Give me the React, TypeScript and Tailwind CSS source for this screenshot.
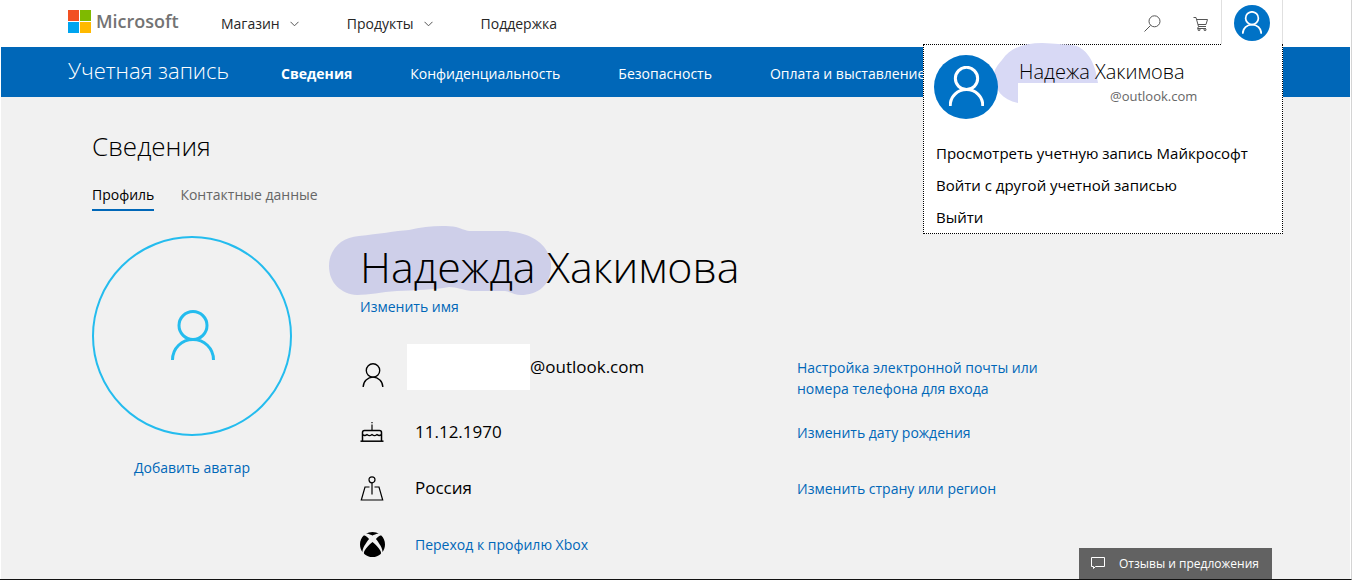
import type { ReactNode } from "react";

function PersonIcon({ className, stroke }: { className: string; stroke: number }) {
  return (
    <svg viewBox="0 0 44 50" className={className} fill="none" stroke="currentColor" strokeWidth={stroke} aria-hidden="true">
      <circle cx="22" cy="15.5" r="14" />
      <path d="M1.500 50C1.500 38 11 29.500 22 29.500S42.500 38 42.500 50" />
    </svg>
  );
}

function Chevron() {
  return (
    <svg viewBox="0 0 9 6" className="mt-px h-[6px] w-[9px]" fill="none" stroke="#555" strokeWidth="1" aria-hidden="true">
      <path d="M0.500 0.800L4.500 4.800L8.500 0.800" />
    </svg>
  );
}

function CakeIcon() {
  return (
    <svg viewBox="0 0 24 20" className="h-5 w-6" fill="none" stroke="currentColor" aria-hidden="true">
      <path d="M12 2.500V8M12 0V1.200" strokeWidth="1.200" />
      <path d="M2.500 19V10.500Q2.500 8.500 4.500 8.500H19.500Q21.500 8.500 21.500 10.500V19" strokeWidth="1.500" />
      <path d="M2.500 12.500Q4.800 14.500 7 12.500Q9.500 14.800 12 12.500Q14.500 14.800 17 12.500Q19.200 14.500 21.500 12.500" strokeWidth="1.200" />
      <path d="M0.500 19.200H23.500" strokeWidth="1.500" />
    </svg>
  );
}

function PlaceIcon() {
  return (
    <svg viewBox="0 0 24 25" className="h-[25px] w-6" fill="none" stroke="currentColor" strokeWidth="1.200" aria-hidden="true">
      <circle cx="12" cy="3.800" r="3" />
      <path d="M12 7V18.500" />
      <path d="M9.500 11H5L1.300 24H22.700L19 11H14.500" />
    </svg>
  );
}

function XboxIcon() {
  return (
    <svg viewBox="0 0 24 24" className="h-[25px] w-[25px] shrink-0" fill="currentColor" aria-hidden="true">
      <path d="M4.102 21.033C6.211 22.881 8.977 24 12 24c3.026 0 5.789-1.119 7.902-2.967 1.877-1.912-4.316-8.709-7.902-11.417-3.582 2.708-9.779 9.505-7.898 11.417zm11.16-14.406c2.500 2.961 7.484 10.313 6.076 12.912C23.002 17.480 24 14.861 24 12.004c0-3.340-1.365-6.362-3.570-8.536 0 0-.027-.022-.082-.042-.063-.022-.152-.045-.281-.045-.592 0-1.985.434-4.805 3.246zM3.654 3.426c-.057.020-.082.041-.086.042C1.365 5.642 0 8.664 0 12.004c0 2.854.998 5.473 2.661 7.533-1.401-2.605 3.579-9.951 6.080-12.910-2.820-2.813-4.216-3.245-4.806-3.245-.131 0-.223.021-.281.046v-.002zM12 3.551S9.055 1.828 6.755 1.746c-.903-.033-1.454.295-1.521.339C7.379.646 9.659 0 11.984 0H12c2.334 0 4.605.646 6.766 2.085-.068-.046-.615-.372-1.520-.339C14.946 1.828 12 3.545 12 3.545v.006z" />
    </svg>
  );
}

function Row({ icon, children, action }: { icon: ReactNode; children: ReactNode; action?: ReactNode }) {
  return (
    <li className="grid h-14 grid-cols-[55px_382px_1fr] items-center">
      <span className="flex w-6 justify-center">{icon}</span>
      <span className="text-[17px] leading-6 whitespace-nowrap">{children}</span>
      <span className="w-64 text-sm leading-[21px] text-[#0067b8]">{action}</span>
    </li>
  );
}

function AccountMenu() {
  return (
    <div className="absolute top-11 -right-px h-[190px] w-[360px] border border-dotted border-black bg-white pl-[10px] text-black">
      <div className="absolute -top-px right-0 h-px w-[60px] bg-white" />
      <svg viewBox="0 0 104 60" className="absolute -top-[2px] left-[70px] h-[60px] w-[104px]" aria-hidden="true">
        <path d="M8 17C16 5 30 0 48 0C62 1 68 1 78 2C92 4 101 18 104 40H24V60C8 57 0 46 0 32C0 26 4 22 8 17Z" fill="#d8d9f5" />
      </svg>
      <div className="relative flex">
        <span className="mt-[10px] flex h-16 w-16 shrink-0 items-center justify-center rounded-full bg-[#0072c6] text-white">
          <PersonIcon className="mb-[2px] h-10 w-[35px]" stroke={3.8} />
        </span>
        <div className="mt-[13px] ml-[21px]">
          <p className="text-xl leading-7 font-light whitespace-nowrap">Надежа Хакимова</p>
          <p className="pl-[91px] text-[13px] leading-[21px] text-[#666]">@outlook.com</p>
        </div>
      </div>
      <ul className="relative mt-[18px] pl-[2px] text-[15px] leading-8">
        <li><a href="#account">Просмотреть учетную запись Майкрософт</a></li>
        <li><a href="#switch">Войти с другой учетной записью</a></li>
        <li><a href="#signout">Выйти</a></li>
      </ul>
    </div>
  );
}

export default function App() {
  return (
    <div className="flex min-h-screen flex-col border-r border-b border-r-[#d4d4d4] border-b-[#111] bg-white px-px font-['Open_Sans','Noto_Sans',sans-serif] text-black">
      <header className="relative z-10 flex h-[47px] items-center bg-white pr-[67px] pl-[67px] text-sm text-[#262626]">
        <a href="#home" className="flex w-[153px] items-center gap-[5px] pb-[5px] text-lg font-semibold text-[#737373]">
          <svg viewBox="0 0 23 23" className="h-[23px] w-[23px]" aria-hidden="true">
            <path d="M0 0H11V11H0Z" fill="#f25022" />
            <path d="M12 0H23V11H12Z" fill="#7fba00" />
            <path d="M0 12H11V23H0Z" fill="#00a4ef" />
            <path d="M12 12H23V23H12Z" fill="#ffb900" />
          </svg>
          Microsoft
        </a>
        <nav className="flex flex-1 items-center gap-12">
          <button className="flex items-center gap-[10px]">Магазин <Chevron /></button>
          <button className="flex items-center gap-[10px]">Продукты <Chevron /></button>
          <a href="#support">Поддержка</a>
        </nav>
        <button aria-label="Поиск" className="mr-8">
          <svg viewBox="0 0 17 17" className="h-[17px] w-[17px]" fill="none" stroke="#555" aria-hidden="true">
            <circle cx="10.500" cy="6.300" r="5.500" />
            <path d="M6.500 10.500L0.500 16.500" />
          </svg>
        </button>
        <button aria-label="Корзина" className="mr-3">
          <svg viewBox="0 0 16 16" className="h-4 w-4" fill="none" stroke="#555" aria-hidden="true">
            <path d="M0.500 1.500H3L5.500 10.500H13M3.500 3.500H14.500L13 8.500H5M5.500 10.500L4.500 12.500H13" />
            <circle cx="6" cy="13.700" r="1" />
            <circle cx="12" cy="13.700" r="1" />
          </svg>
        </button>
        <div className="relative flex h-[47px] w-[62px] items-start justify-center border-x border-[#e0e0e0] bg-white pt-[5px]">
          <button aria-label="Учетная запись" className="flex h-9 w-9 items-center justify-center rounded-full bg-[#0072c6] text-white">
            <PersonIcon className="mb-[2px] h-[23px] w-5" stroke={3.8} />
          </button>
          <AccountMenu />
        </div>
      </header>

      <nav className="flex h-[50px] items-center gap-[58px] overflow-hidden bg-[#0067b8] pl-[67px] text-sm whitespace-nowrap text-white">
        <a href="#account" className="-mr-[6px] pb-[2px] text-[22px] font-light">Учетная запись</a>
        <a href="#info" className="pt-1 font-bold">Сведения</a>
        <a href="#privacy" className="pt-1">Конфиденциальность</a>
        <a href="#security" className="pt-1">Безопасность</a>
        <a href="#billing" className="pt-1">Оплата и выставление счетов</a>
      </nav>

      <main className="flex-1 bg-[#f1f1f1] pt-[31px] pl-[91px]">
        <h1 className="text-[26px] leading-9 font-light">Сведения</h1>
        <div className="mt-5 flex gap-[26px] text-sm leading-[22px]">
          <a href="#profile" className="border-b-2 border-[#0067b8] pb-[3px]">Профиль</a>
          <a href="#contacts" className="text-[#666]">Контактные данные</a>
        </div>

        <div className="mt-[25px] flex">
          <section className="w-[268px] shrink-0">
            <div className="flex w-[200px] flex-col items-center">
              <div className="flex h-[200px] w-[200px] items-center justify-center rounded-full border-2 border-[#24bcee] pb-[2px] pl-[2px] text-[#24bcee]">
                <PersonIcon className="h-[50px] w-11" stroke={3} />
              </div>
              <a href="#avatar" className="mt-[21px] text-sm leading-[22px] text-[#0067b8]">Добавить аватар</a>
            </div>
          </section>

          <section className="flex-1">
            <div className="relative pt-px">
              <svg viewBox="0 0 223 70" className="absolute -top-[10px] -left-[31px] h-[70px] w-[223px]" aria-hidden="true">
                <path d="M30 10C50 8 66 5 80 4C96 0 115 -1 127 1C134 3 137 5 142 5H176C205 6 222 21 222 40C222 60 208 69 192 69C186 69 182 66 176 65H142C134 64 128 61 120 61C105 64 86 64 68 65C52 66 40 69 28 69C12 68 0 57 0 40C0 24 12 11 30 10Z" fill="#cecfe9" />
              </svg>
              <h2 className="relative text-[43px] leading-[60px] font-light whitespace-nowrap">Надежда Хакимова</h2>
            </div>
            <a href="#rename" className="block text-sm leading-5 text-[#0067b8]">Изменить имя</a>
            <ul className="mt-[30px]">
              <li className="grid h-[57px] grid-cols-[47px_390px_1fr]">
                <span className="flex w-[25px] justify-center pt-4"><PersonIcon className="h-6 w-[22px]" stroke={2.8} /></span>
                <span className="flex text-[17px] leading-6 whitespace-nowrap">
                  <span className="-mt-[3px] h-[46px] w-[123px] bg-white" />
                  <span className="pt-2">@outlook.com</span>
                </span>
                <a href="#login" className="w-64 pt-[10px] text-sm leading-[21px] text-[#0067b8]">
                  Настройка электронной почты или номера телефона для входа
                </a>
              </li>
              <Row icon={<CakeIcon />} action={<a href="#birthday">Изменить дату рождения</a>}>11.12.1970</Row>
              <Row icon={<PlaceIcon />} action={<a href="#region">Изменить страну или регион</a>}>Россия</Row>
              <Row icon={<XboxIcon />}><a href="#xbox" className="text-sm text-[#0067b8]">Переход к профилю Xbox</a></Row>
            </ul>
          </section>
        </div>
      </main>

      <button className="fixed right-20 bottom-px flex h-[31px] w-[193px] items-center gap-[14px] bg-[#626262] pl-3 text-xs whitespace-nowrap text-white">
        <svg viewBox="0 0 14 13" className="h-[13px] w-[14px]" fill="none" stroke="currentColor" aria-hidden="true">
          <path d="M0.500 0.500H13.500V9.500H4.500L2.500 11.500V9.500H0.500Z" />
        </svg>
        Отзывы и предложения
      </button>
    </div>
  );
}
